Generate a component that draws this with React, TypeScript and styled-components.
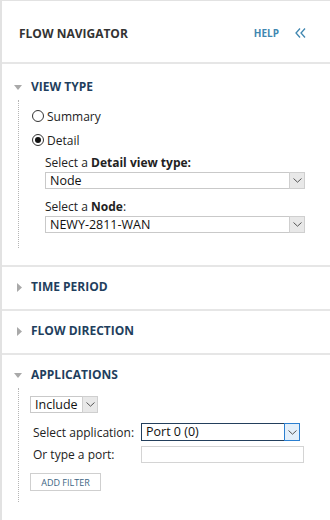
import styled, { createGlobalStyle } from "styled-components";

const GlobalStyle = createGlobalStyle`
  html, body {
    margin: 0;
    padding: 0;
    background: #ffffff;
  }
  body {
    font-family: "Open Sans", "Liberation Sans", sans-serif;
    color: #222;
  }
`;

function Caret({ open }: { open: boolean }) {
  return (
    <CaretBox>
      {open ? (
        <svg width="8" height="5" viewBox="0 0 8 5">
          <path d="M0 0 H8 L4 5 Z" fill="#a9a9a9" />
        </svg>
      ) : (
        <svg width="5" height="9" viewBox="0 0 5 9" style={{ marginLeft: 3 }}>
          <path d="M0 0 L5 4.5 L0 9 Z" fill="#a9a9a9" />
        </svg>
      )}
    </CaretBox>
  );
}

function ChevronDown() {
  return (
    <svg width="9" height="5" viewBox="0 0 9 5">
      <path d="M0.5 0.5 L4.5 4.2 L8.5 0.5" fill="none" stroke="#555" strokeWidth="1" />
    </svg>
  );
}

function Select({
  value,
  width,
  focused,
}: {
  value: string;
  width: number;
  focused?: boolean;
}) {
  return (
    <SelectBox $width={width} $focused={focused}>
      <SelectValue>{value}</SelectValue>
      <SelectArrow $focused={focused}>
        <ChevronDown />
      </SelectArrow>
    </SelectBox>
  );
}

export default function App() {
  return (
    <>
      <GlobalStyle />
      <Panel>
        <Header>
          <Title>FLOW NAVIGATOR</Title>
          <HeaderActions>
            <HelpLink>HELP</HelpLink>
            <svg width="11" height="10" viewBox="0 0 11 10">
              <path
                d="M5 0.5 L1 5 L5 9.5 M10 0.5 L6 5 L10 9.5"
                fill="none"
                stroke="#3f86b0"
                strokeWidth="1.3"
              />
            </svg>
          </HeaderActions>
        </Header>

        <Section>
          <SectionHeader $open $top={16}>
            <Caret open />
            <SectionTitle>VIEW TYPE</SectionTitle>
          </SectionHeader>
          <SectionBody $pad={13} $bottom={15}>
            <RadioRow>
              <RadioCircle $checked={false} />
              Summary
            </RadioRow>
            <RadioRow>
              <RadioCircle $checked />
              Detail
            </RadioRow>
            <Indent>
              <FieldLabel>
                Select a <b>Detail view type:</b>
              </FieldLabel>
              <Select value="Node" width={260} />
              <FieldLabel $gap={10}>
                Select a <b>Node</b>:
              </FieldLabel>
              <Select value="NEWY-2811-WAN" width={260} />
            </Indent>
          </SectionBody>
        </Section>

        <Section>
          <SectionHeader $top={13}>
            <Caret open={false} />
            <SectionTitle>TIME PERIOD</SectionTitle>
          </SectionHeader>
        </Section>

        <Section>
          <SectionHeader $top={13}>
            <Caret open={false} />
            <SectionTitle>FLOW DIRECTION</SectionTitle>
          </SectionHeader>
        </Section>

        <LastSection>
          <SectionHeader $open $top={13}>
            <Caret open />
            <SectionTitle>APPLICATIONS</SectionTitle>
          </SectionHeader>
          <SectionBody $pad={11} $bottom={11}>
            <IncludeWrap>
              <Select value="Include" width={68} />
            </IncludeWrap>
            <FormRow $gap={10}>
              <RowLabel>Select application:</RowLabel>
              <Select value="Port 0 (0)" width={159} focused />
            </FormRow>
            <FormRow $gap={5}>
              <RowLabel>Or type a port:</RowLabel>
              <TextInput />
            </FormRow>
            <AddButton>ADD FILTER</AddButton>
          </SectionBody>
        </LastSection>
      </Panel>
    </>
  );
}

const Panel = styled.div`
  width: 330px;
  height: 520px;
  box-sizing: border-box;
  border-top: 1px solid #e2e2e2;
  border-left: 2px solid #e2e2e2;
  background: #fff;
`;

const Header = styled.div`
  display: flex;
  align-items: center;
  justify-content: space-between;
  padding: 3px 24px 0 17px;
  box-sizing: border-box;
  height: 63px;
  border-bottom: 2px solid #e6e6e6;
`;

const Title = styled.div`
  font-weight: 700;
  font-size: 12px;
  color: #333;
`;

const HeaderActions = styled.div`
  display: flex;
  align-items: center;
  gap: 16px;
`;

const HelpLink = styled.span`
  font-weight: 700;
  font-size: 10px;
  color: #3f86b0;
`;

const Section = styled.div`
  border-bottom: 2px solid #e6e6e6;
`;

const LastSection = styled.div``;

const SectionHeader = styled.div<{ $open?: boolean; $top: number }>`
  display: flex;
  align-items: center;
  height: 14px;
  padding: ${(p) => p.$top}px 0 ${(p) => (p.$open ? 6 : 15)}px 12px;
`;

const CaretBox = styled.span`
  width: 17px;
  display: flex;
  align-items: center;
`;

const SectionTitle = styled.div`
  font-weight: 700;
  font-size: 12px;
  color: #1f3f5e;
  line-height: 14px;
`;

const SectionBody = styled.div<{ $pad: number; $bottom: number }>`
  margin: 0 0 17px 16px;
  border-left: 1px dotted #b5b5b5;
  padding: 4px 0 ${(p) => p.$bottom}px ${(p) => p.$pad}px;
`;

const RadioRow = styled.label`
  display: flex;
  align-items: center;
  gap: 3px;
  height: 24px;
  font-size: 12px;
  color: #222;
`;

const RadioCircle = styled.span<{ $checked: boolean }>`
  width: 12px;
  height: 12px;
  box-sizing: border-box;
  border-radius: 50%;
  border: 1px solid #333;
  display: flex;
  align-items: center;
  justify-content: center;
  &::after {
    content: "";
    width: 6px;
    height: 6px;
    border-radius: 50%;
    background: ${(p) => (p.$checked ? "#111" : "transparent")};
  }
`;

const Indent = styled.div`
  margin: 3px 0 0 13px;
`;

const FieldLabel = styled.div<{ $gap?: number }>`
  font-size: 12px;
  line-height: 16px;
  margin: ${(p) => p.$gap ?? 0}px 0 1px;
  color: #222;
  b {
    font-weight: 700;
  }
`;

const SelectBox = styled.div<{ $width: number; $focused?: boolean }>`
  width: ${(p) => p.$width}px;
  height: ${(p) => (p.$focused ? 18 : 17)}px;
  box-sizing: border-box;
  display: flex;
  align-items: stretch;
  border: ${(p) => (p.$focused ? "1.5px solid #233f5c" : "1px solid #c9c9c9")};
  background: #fff;
`;

const SelectValue = styled.div`
  flex: 1;
  font-size: 12.5px;
  line-height: 15px;
  padding-left: 4px;
  color: #111;
  white-space: nowrap;
  overflow: hidden;
`;

const SelectArrow = styled.div<{ $focused?: boolean }>`
  width: 16px;
  display: flex;
  align-items: center;
  justify-content: center;
  box-sizing: border-box;
  background: ${(p) => (p.$focused ? "#e3effa" : "#e8e8e8")};
  border: 1px solid ${(p) => (p.$focused ? "#2b7fd0" : "#cfcfcf")};
  margin: -1px -1px -1px 0;
`;

const IncludeWrap = styled.div`
  padding-top: 4px;
`;

const FormRow = styled.div<{ $gap: number }>`
  display: flex;
  align-items: center;
  margin-top: ${(p) => p.$gap}px;
  padding-left: 3px;
`;

const RowLabel = styled.div`
  width: 108px;
  font-size: 12px;
  color: #222;
`;

const TextInput = styled.div`
  width: 163px;
  height: 17px;
  box-sizing: border-box;
  border: 1px solid #d4d4d4;
`;

const AddButton = styled.button`
  margin-top: 10px;
  width: 71px;
  height: 18px;
  padding: 0;
  background: #fff;
  border: 1px solid #cfcfcf;
  border-radius: 0;
  font-family: "Open Sans", "Liberation Sans", sans-serif;
  font-size: 9px;
  color: #3d6584;
  display: block;
`;
